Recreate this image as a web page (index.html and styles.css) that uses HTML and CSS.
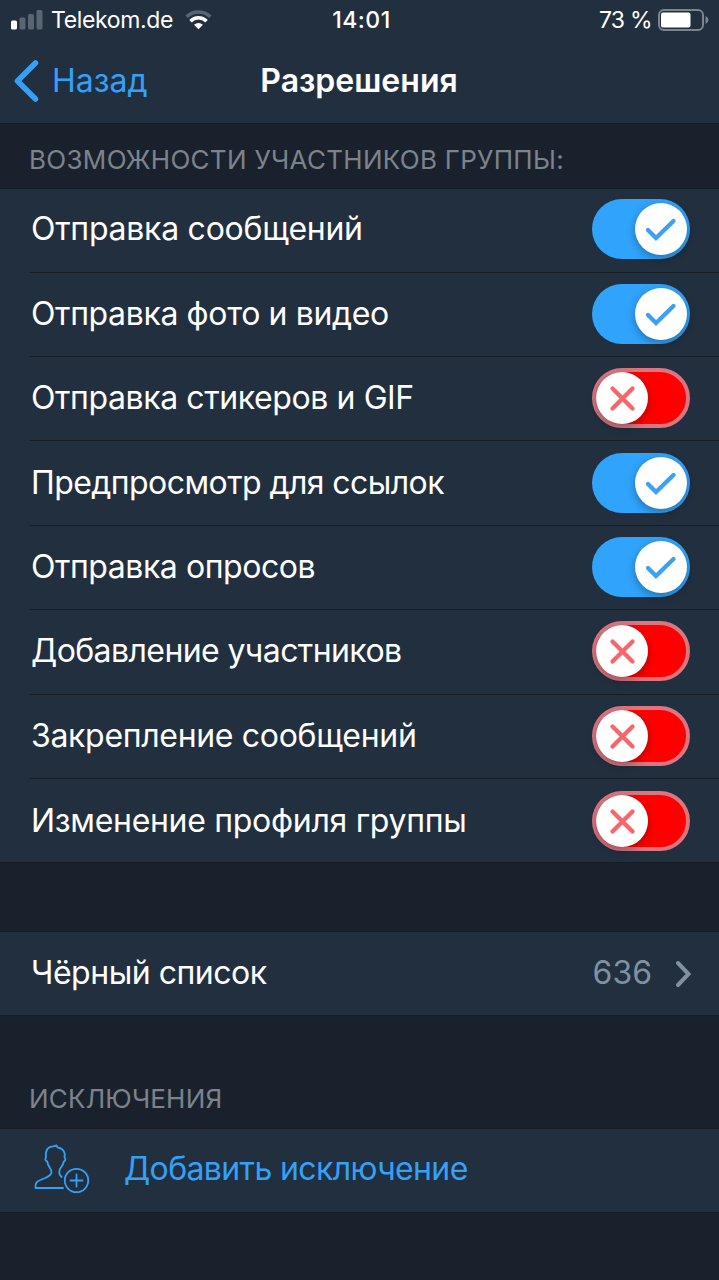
FILE: index.html
```html
<!DOCTYPE html>
<html lang="ru">
<head>
<meta charset="utf-8">
<title>Разрешения</title>
<link rel="stylesheet" href="styles.css">
</head>
<body>
<svg class="defs" width="0" height="0" aria-hidden="true">
  <symbol id="check" viewBox="0 0 52 52"><path d="M13 27l8 8L38.500 18"/></symbol>
  <symbol id="cross" viewBox="0 0 52 52"><path d="M16.500 16.500l20 20M36.500 16.500l-20 20"/></symbol>
</svg>
<header class="top">
  <div class="status">
    <div class="carrier">
      <svg class="signal" width="32" height="20" viewBox="0 0 32 20"><rect x="0" y="10.500" width="6" height="9" rx="1.500" fill="#fff"/><g fill="#586572"><rect x="8.500" y="7.500" width="6" height="12" rx="1.500"/><rect x="17" y="4" width="6" height="15.500" rx="1.500"/><rect x="25.500" y="0" width="6" height="19.500" rx="1.500"/></g></svg>
      <span class="operator">Telekom.de</span>
      <svg class="wifi" width="27" height="20" viewBox="0 0 28 20"><g fill="none" stroke-width="3.700"><path d="M1.700 6.700a17.500 17.500 0 0 1 24.600 0" stroke="#586572"/><path d="M5.700 11.200a11.700 11.700 0 0 1 16.600 0" stroke="#fff"/></g><path d="M9.300 15q4.700-3.700 9.400 0L14 19.500z" fill="#fff"/></svg>
    </div>
    <span class="clock">14:01</span>
    <div class="power">
      <span class="percent">73 %</span>
      <svg class="battery" width="51" height="23" viewBox="0 0 51 23"><rect x="1" y="1" width="44" height="20" rx="5" fill="none" stroke="#7b8590" stroke-width="2"/><rect x="3" y="3.500" width="29.500" height="15" rx="2" fill="#fff"/><path d="M47.500 7v8q3-1.300 3-4t-3-4z" fill="#7b8590"/></svg>
    </div>
  </div>
  <nav class="nav">
    <a class="back"><svg width="26" height="42" viewBox="0 0 26 42"><path d="M22.500 3L4.500 21l18 18" fill="none" stroke="#34a1f8" stroke-width="5.500" stroke-linecap="round" stroke-linejoin="round"/></svg><span>Назад</span></a>
    <h1 class="title">Разрешения</h1>
    <span></span>
  </nav>
</header>
<h2 class="caption caption-main">ВОЗМОЖНОСТИ УЧАСТНИКОВ ГРУППЫ:</h2>
<ul class="list">
  <li class="row"><span class="label l1">Отправка сообщений</span><span class="switch on"><svg class="knob"><use href="#check"/></svg></span></li>
  <li class="row"><span class="label l2">Отправка фото и видео</span><span class="switch on"><svg class="knob"><use href="#check"/></svg></span></li>
  <li class="row"><span class="label l3">Отправка стикеров и GIF</span><span class="switch off"><svg class="knob"><use href="#cross"/></svg></span></li>
  <li class="row"><span class="label l4">Предпросмотр для ссылок</span><span class="switch on"><svg class="knob"><use href="#check"/></svg></span></li>
  <li class="row"><span class="label l5">Отправка опросов</span><span class="switch on"><svg class="knob"><use href="#check"/></svg></span></li>
  <li class="row"><span class="label l6">Добавление участников</span><span class="switch off"><svg class="knob"><use href="#cross"/></svg></span></li>
  <li class="row"><span class="label l7">Закрепление сообщений</span><span class="switch off"><svg class="knob"><use href="#cross"/></svg></span></li>
  <li class="row"><span class="label l8">Изменение профиля группы</span><span class="switch off"><svg class="knob"><use href="#cross"/></svg></span></li>
</ul>
<div class="blacklist">
  <span class="label l9">Чёрный список</span>
  <span class="count">636</span>
  <svg width="17" height="28" viewBox="0 0 17 28"><path d="M3 3l10.500 11L3 25" fill="none" stroke="#8091a1" stroke-width="4" stroke-linecap="round"/></svg>
</div>
<h2 class="caption caption-ex">ИСКЛЮЧЕНИЯ</h2>
<a class="add">
  <svg width="56" height="50" viewBox="0 0 56 50" fill="none" stroke="#34a1f8" stroke-width="1.800" stroke-linecap="round" stroke-linejoin="round"><path d="M29 44H1.500C1 37.500 4.500 36.500 10 34.500C15 32.500 17.500 31 17.500 28C17.500 24.500 14 23 13.200 17.500C11 17 11 14 12 13.500C11 6 14 2.500 19 2.300L22.500 1.500L23.500 3.300C29.500 4.500 31.700 8.500 30.500 13.500C32 14 31.500 17 29.800 17.500C29.200 21.500 26.500 23.500 25.700 25.500C25 28 25 31 27.700 33"/><circle cx="42.500" cy="36.500" r="11.700"/><path d="M42.500 30.500v12M36.500 36.500h12"/></svg>
  <span class="add-text">Добавить исключение</span>
</a>
</body>
</html>
```
FILE: styles.css
```css
* { box-sizing: border-box; }
body { margin: 0; min-height: 1280px; background: #19222c; color: #fff; font-family: Inter, "Noto Sans", sans-serif; overflow: hidden; }
h1, h2, ul { margin: 0; padding: 0; font-weight: 400; list-style: none; }
.defs { display: block; }
svg { flex: none; }
span { white-space: nowrap; }
.top { height: 124px; background: #212f3f; border-bottom: 1px solid #141c26; }
.status { height: 40px; display: grid; grid-template-columns: 1fr auto 1fr; align-items: center; font-size: 23px; line-height: 28px; padding: 0 11px; }
.carrier { display: flex; align-items: center; }
.operator { margin-left: 8px; letter-spacing: -0.35px; }
.wifi { margin-left: 12px; }
.clock { font-weight: 500; letter-spacing: 0.5px; padding-left: 4px; }
.power { display: flex; align-items: center; justify-content: flex-end; gap: 6px; margin-right: -1px; }
.percent { letter-spacing: -0.7px; }
.nav { height: 82px; display: grid; grid-template-columns: 1fr auto 1fr; align-items: center; padding: 0 14px 0 13px; }
.back { display: flex; align-items: center; gap: 13px; color: #34a1f8; font-size: 32px; line-height: 40px; }
.title { font-size: 32px; font-weight: 600; line-height: 40px; }
.caption { font-size: 26px; line-height: 32px; color: #7c838c; padding-left: 29px; }
.caption-main { height: 64px; padding-top: 20px; letter-spacing: 0.3px; }
.list { height: 675px; padding-top: 0.3px; background: #212f3f; box-shadow: inset 0 1px #141c26, inset 0 -1px #141c26; }
.row { height: 84.4px; margin-left: 30px; padding-right: 29px; display: flex; align-items: center; justify-content: space-between; border-bottom: 1px solid #141c26; }
.row:last-child { border-bottom: 0; }
.label { font-size: 32px; line-height: 40px; padding-left: 1px; margin-bottom: 1px; }
.l1 { letter-spacing: -0.26px; }
.l2 { letter-spacing: -0.37px; }
.l3 { letter-spacing: -0.4px; }
.l4 { letter-spacing: -0.57px; }
.l5 { letter-spacing: -0.45px; }
.l6 { letter-spacing: -0.58px; }
.l7 { letter-spacing: -0.32px; }
.l8 { letter-spacing: -0.3px; }
.l9 { letter-spacing: -0.48px; margin-bottom: 2px; }
.switch { width: 98px; height: 60px; border-radius: 30px; display: flex; align-items: center; padding: 0 3px; margin-bottom: 1px; }
.on { background: #30a3fc; justify-content: flex-end; stroke: #3ba1f2; }
.off { background: #fe0000; border: 4px solid #db7580; padding: 0; stroke: #f8666c; }
.knob { width: 52px; height: 52px; border-radius: 50%; background: #fff; fill: none; stroke-width: 4.3px; stroke-linecap: round; box-shadow: 0 3px 8px rgba(0, 0, 0, .3); }
.blacklist { height: 85px; margin-top: 68px; background: #212f3f; border: solid #141c26; border-width: 1px 0; padding: 0 27px 0 30px; display: flex; align-items: center; }
.count { margin-left: auto; margin-right: 23px; margin-bottom: 2px; font-size: 32px; line-height: 40px; color: #8091a1; }
.caption-ex { height: 112px; padding-top: 67px; letter-spacing: 0.2px; }
.add { height: 85px; background: #212f3f; border: solid #141c26; border-width: 1px 0; padding: 0 0 4px 34px; display: flex; align-items: center; gap: 34px; color: #34a1f8; font-size: 32px; line-height: 40px; }
.add-text { letter-spacing: -0.62px; }
```
